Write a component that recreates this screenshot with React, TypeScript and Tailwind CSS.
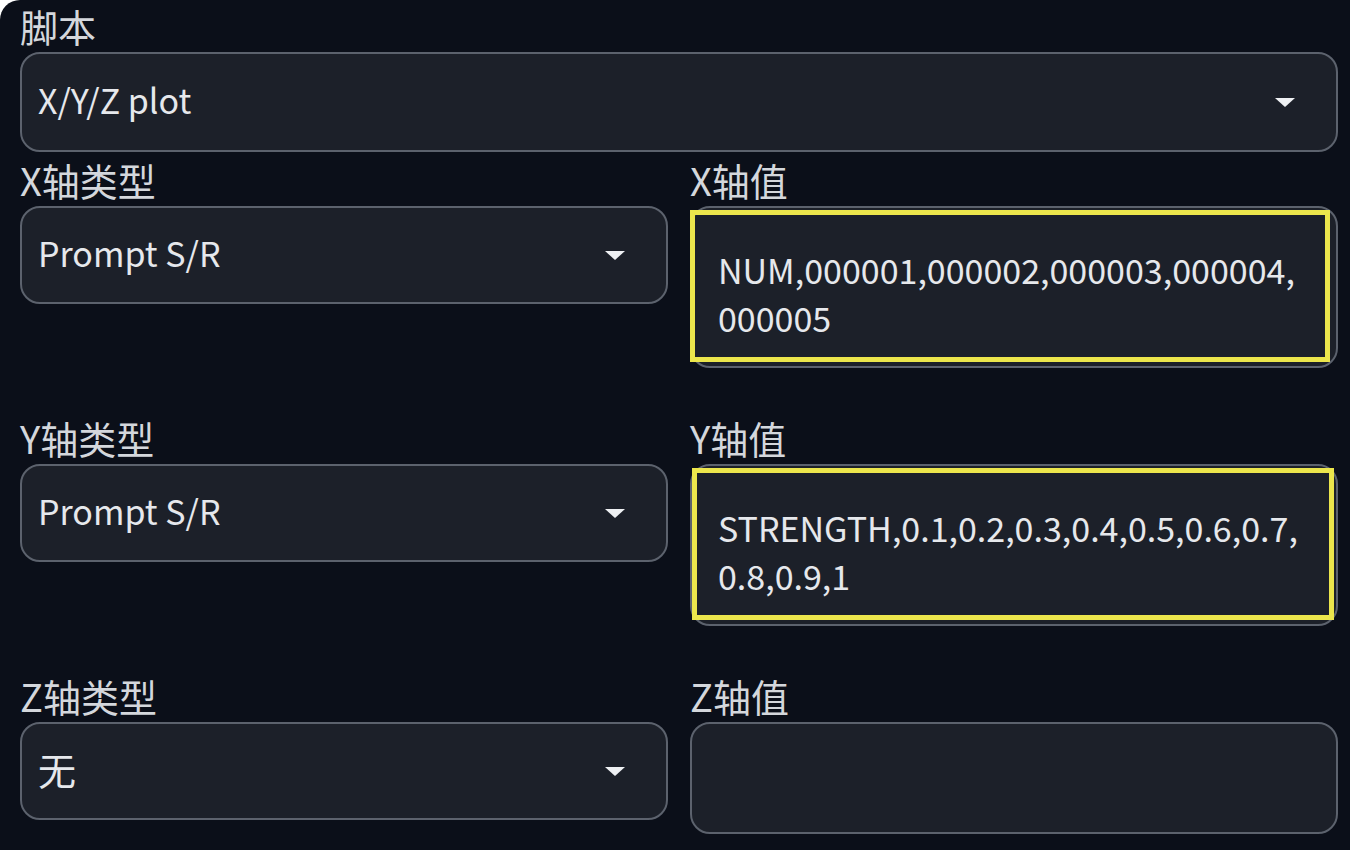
import React from 'react';

const FONT = { fontFamily: '"Noto Sans CJK SC", "Noto Sans", sans-serif' };

const Caret: React.FC = () => (
  <svg width="22" height="11" viewBox="0 0 22 11" className="shrink-0">
    <path d="M1 1 L21 1 L11 10 Z" fill="#eef0f3" />
  </svg>
);

const Label: React.FC<{ text: string }> = ({ text }) => (
  <div className="h-[48px] leading-[48px] mb-[2px] text-[38px] text-[#d4d7dc]">{text}</div>
);

const Select: React.FC<{ value: string; tall?: boolean; cjk?: boolean }> = ({ value, tall, cjk }) => (
  <div
    className={`flex items-center justify-between ${tall ? 'h-[100px]' : 'h-[98px]'} rounded-[20px] border-2 border-[#5c626d] bg-[#1c2029] pl-[16px] pr-[40px]`}
  >
    <span className={`${cjk ? 'text-[38px]' : 'text-[34px]'} leading-[48px] text-[#e6e8ec] -mt-[4px]`}>
      {value}
    </span>
    <Caret />
  </div>
);

const ValueBox: React.FC<{ lines: string[]; highlight?: 'x' | 'y'; short?: boolean }> = ({
  lines,
  highlight,
  short,
}) => (
  <div
    className={`relative ${short ? 'h-[112px]' : 'h-[162px]'} rounded-[20px] border-2 border-[#5c626d] bg-[#1c2029] pl-[26px] pt-[38px]`}
  >
    {lines.map((l, i) => (
      <div key={i} className="text-[34px] leading-[48px] text-[#e6e8ec] whitespace-nowrap">
        {l}
      </div>
    ))}
    {/* выделение поверх поля */}
    {highlight === 'x' && (
      <div className="absolute left-[-2px] top-[2px] right-[6px] bottom-[4px] border-[5px] border-[#ece64c]" />
    )}
    {highlight === 'y' && (
      <div className="absolute left-[0px] top-[2px] right-[2px] bottom-[4px] border-[5px] border-[#ece64c]" />
    )}
  </div>
);

const App: React.FC = () => {
  return (
    <div className="w-[1350px] h-[850px] bg-white" style={FONT}>
      <div className="h-full rounded-tl-[20px] bg-[#0b0f19] pl-[20px] pr-[12px] pt-[2px] overflow-hidden">
        {/* скрипт */}
        <Label text="脚本" />
        <Select value="X/Y/Z plot" tall />

        <div className="grid grid-cols-2 gap-x-[22px] gap-y-[46px] mt-[4px]">
          <div>
            <Label text="X轴类型" />
            <Select value="Prompt S/R" />
          </div>
          <div>
            <Label text="X轴值" />
            <ValueBox lines={['NUM,000001,000002,000003,000004,', '000005']} highlight="x" />
          </div>

          <div>
            <Label text="Y轴类型" />
            <Select value="Prompt S/R" />
          </div>
          <div>
            <Label text="Y轴值" />
            <ValueBox lines={['STRENGTH,0.1,0.2,0.3,0.4,0.5,0.6,0.7,', '0.8,0.9,1']} highlight="y" />
          </div>

          <div>
            <Label text="Z轴类型" />
            <Select value="无" cjk />
          </div>
          <div>
            <Label text="Z轴值" />
            <ValueBox lines={[]} short />
          </div>
        </div>
      </div>
    </div>
  );
};

export default App;
